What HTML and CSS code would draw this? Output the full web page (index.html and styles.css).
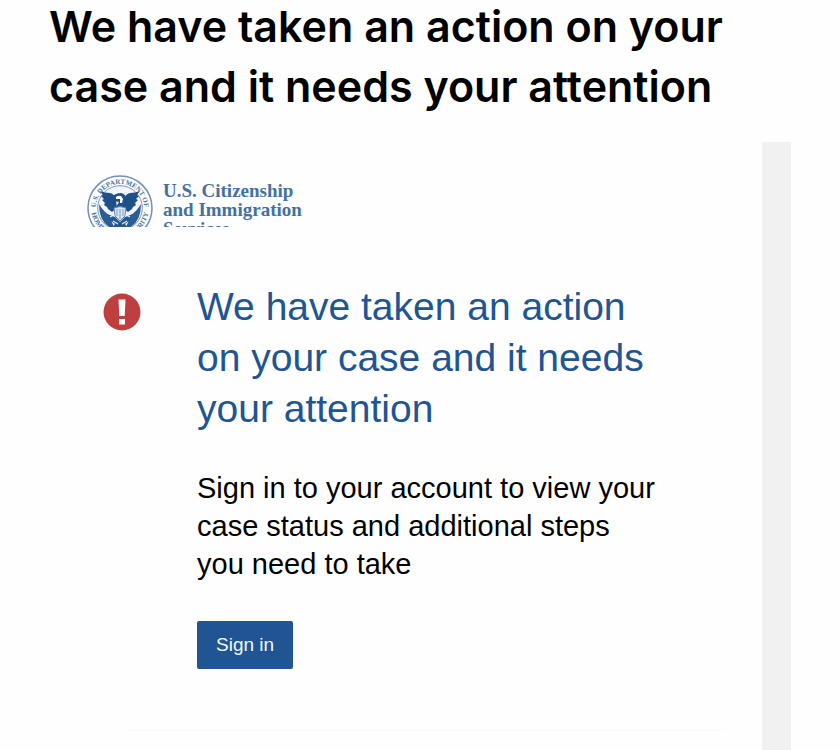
FILE: index.html
```html
<!DOCTYPE html>
<html lang="en">
  <head>
    <meta charset="UTF-8" />
    <meta name="viewport" content="width=device-width, initial-scale=1.0" />
    <title>We have taken an action on your case</title>
    <link rel="stylesheet" href="styles.css">
  </head>
  <body>
    <h1 class="subject">We have taken an action on your case and it needs your attention</h1>

    <div class="message">
      <main class="message-body">
        <div class="brand">
          <svg class="seal" viewBox="0 0 66 66" aria-hidden="true">
            <defs>
              <path id="ring-top" d="M9.2 36 A24 24 0 1 1 56.8 36" />
              <path id="ring-bottom" d="M4.4 37 A28.9 28.9 0 0 0 61.6 37" />
            </defs>
            <circle cx="33" cy="33" r="32" fill="#fff" stroke="#6f91b7" stroke-width="1.5" />
            <circle cx="33" cy="33" r="22.3" fill="#f3f7fb" stroke="#7897bb" stroke-width="1" />
            <g class="seal-text">
              <text text-anchor="middle"><textPath href="#ring-top" startOffset="50%">U.S. DEPARTMENT OF</textPath></text>
              <text text-anchor="middle"><textPath href="#ring-bottom" startOffset="50%">HOMELAND SECURITY</textPath></text>
            </g>
            <!-- shield quarters -->
            <path d="M12 29 Q16 36 22 40 L27 52 L24 53 Q12 47 12 29Z" fill="#2c5c94" />
            <path d="M54 29 Q50 36 44 40 L39 52 L42 53 Q54 47 54 29Z" fill="#2c5c94" />
            <!-- wings -->
            <path d="M13 16 Q18 18 23 18 Q28 19 29 25 L30 33 L25 37 L21 34 L20 32 L17 30 L18 28 L15 25 L17 24 L14 21 L16 20Z" fill="#1f5088" />
            <path d="M53 16 Q48 18 43 18 Q38 19 37 25 L36 33 L41 37 L45 34 L46 32 L49 30 L48 28 L51 25 L49 24 L52 21 L50 20Z" fill="#1f5088" />
            <!-- head -->
            <path d="M26 21 Q29 18 34 18 Q39 19 40 25 L37 32 L29 32 L32 27 L27 26Z" fill="#1f5088" />
            <path d="M29 22 Q31 20 34 21 L36 24 L35 28 L33 28 L33 24 L29 24Z" fill="#fff" />
            <!-- chest shield and tail -->
            <path d="M27 33 Q33 30 39 33 L38 41 L33 46 L28 41Z" fill="#d8e4ef" stroke="#5c83ae" stroke-width="1" />
            <path d="M30 34 V41 M33 34 V44 M36 34 V41" stroke="#7f9fc1" stroke-width="1" />
            <path d="M20 39 L28 42 L33 47 L38 42 L46 39 L42 46 L38 49 L43 55 H23 L28 49 L24 46Z" fill="#245690" />
            <path d="M18 36 L27 40 L23 42 M48 36 L39 40 L43 42 M26 46 L31 49 M40 46 L35 49" fill="none" stroke="#e5edf5" stroke-width="1.3" />
          </svg>
          <div class="brand-name">U.S. Citizenship<br>and Immigration<br>Services</div>
        </div>

        <section class="notice">
          <svg class="alert-icon" viewBox="0 0 38 38" role="img" aria-label="Alert">
            <circle cx="19" cy="19" r="18.5" fill="#bf3f40" />
            <path d="M15.5 6.5 H22.5 L21.7 23 H16.3Z M16 26 H22 V31.5 H16Z" fill="#fff" />
          </svg>
          <div class="notice-text">
            <h2>We have taken an action on your case and it needs your attention</h2>
            <p>Sign in to your account to view your case status and additional steps you need to take</p>
            <button type="button" class="sign-in">Sign in</button>
          </div>
        </section>

        <hr class="divider">
      </main>
      <div class="gutter"></div>
    </div>
  </body>
</html>
```

FILE: styles.css
```css
body {
  margin: 0;
  min-height: 100vh;
  display: flex;
  flex-direction: column;
  background: #fefefe;
  color: #000;
  font-family: "Liberation Sans", Arial, sans-serif;
}

/* Subject line */
.subject {
  margin: -4px 0 0;
  padding: 0 49px 26px;
  font-family: Inter, sans-serif;
  font-size: 43px;
  font-weight: 600;
  line-height: 60px;
}

/* Mail content with the grey strip on the right */
.message {
  flex: 1;
  display: flex;
  padding: 0 49px;
}

.message-body {
  flex: 1;
  padding: 33px 38px 0;
}

.gutter {
  width: 29px;
  background: #f1f1f1;
}

/* Logo, cut off below the second line */
.brand {
  display: flex;
  gap: 10px;
  height: 52px;
  overflow: hidden;
}

.seal {
  flex: none;
  width: 66px;
  height: 66px;
}

.seal-text {
  fill: #46719f;
  font-family: "Liberation Serif", serif;
  font-size: 7px;
  font-weight: 700;
}

.brand-name {
  padding-top: 6px;
  color: #44719f;
  font-family: "Liberation Serif", "Times New Roman", serif;
  font-size: 19px;
  font-weight: 700;
  line-height: 19px;
}

/* Notice */
.notice {
  display: flex;
  gap: 56px;
  padding: 54px 64px 60px 16px;
}

.alert-icon {
  flex: none;
  width: 38px;
  height: 38px;
  margin-top: 12px;
}

.notice-text {
  flex: 1;
}

h2 {
  margin: 0 0 35px;
  color: #205493;
  font-size: 39px;
  font-weight: 400;
  line-height: 51px;
}

p {
  margin: 0 0 38px;
  font-size: 29px;
  line-height: 38px;
}

.sign-in {
  padding: 0 19px;
  border: none;
  border-radius: 2px;
  background: #205493;
  color: #f4fafc;
  font-family: inherit;
  font-size: 19px;
  line-height: 48px;
  cursor: pointer;
}

.divider {
  margin: 0 0 0 40px;
  border: none;
  border-top: 2px solid #fbfbfb;
}
```
